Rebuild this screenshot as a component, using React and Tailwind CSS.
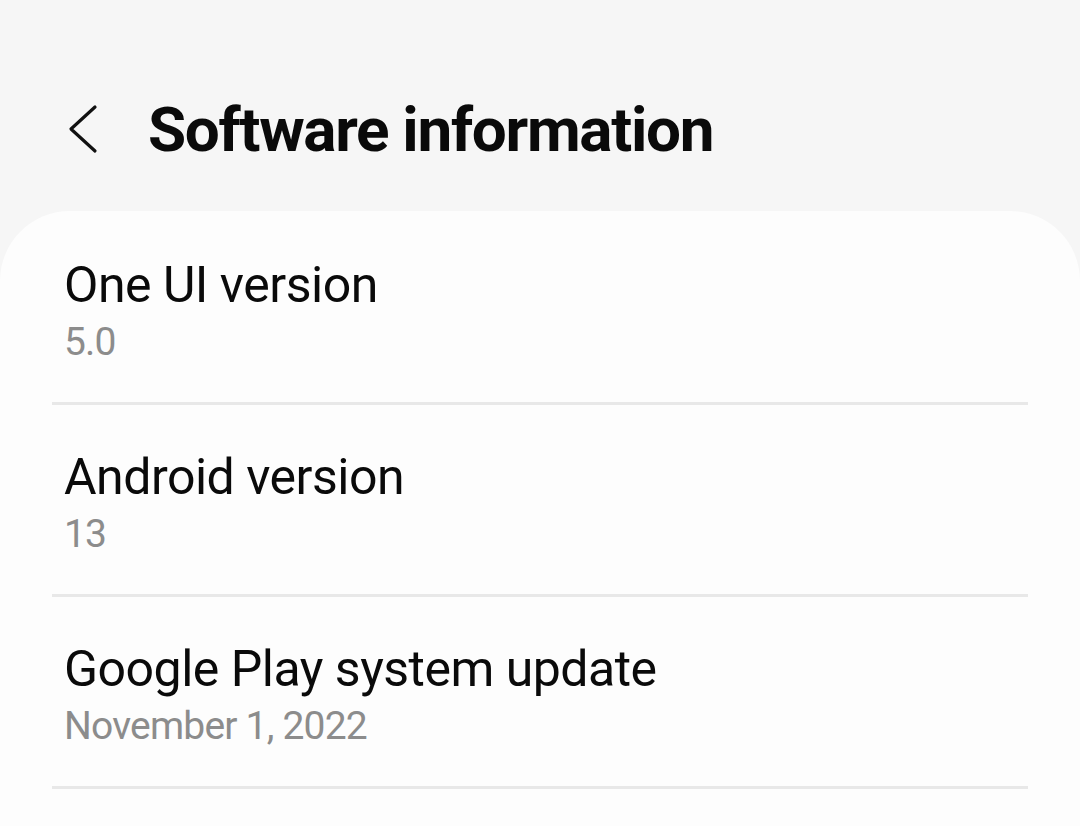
export default function App() {
  const items = [
    { t: "One UI version", s: "5.0" },
    { t: "Android version", s: "13" },
    { t: "Google Play system update", s: "November 1, 2022" },
  ];
  return (
    <div className="w-[1080px] h-[826px] overflow-hidden bg-[#f6f6f6] flex flex-col" style={{ fontFamily: "Roboto, 'Noto Sans', sans-serif" }}>
      <div className="h-[211px] shrink-0 flex items-start pt-[100px]">
        <div className="w-[148px] flex pl-[66px] pt-[4px]">
          <svg width="34" height="50" viewBox="0 0 34 50" fill="none">
            <path d="M29 3 L5 25 L29 47" stroke="#111" strokeWidth="3.2" strokeLinecap="round" strokeLinejoin="round" />
          </svg>
        </div>
        <h1 className="text-[62px] leading-[60px] font-bold text-[#0a0a0a] tracking-[-1.3px]">Software information</h1>
      </div>
      <div className="flex-1 bg-[#fdfdfd] rounded-t-[70px] px-[52px] pt-[2px]">
        {items.map((it) => (
          <div key={it.t} className="h-[192px] border-b-[3px] border-[#e8e8e8] px-[12px] pt-[44px]">
            <div className="text-[50px] leading-[56px] text-[#0a0a0a] tracking-[-0.5px]">{it.t}</div>
            <div className="text-[39px] leading-[48px] text-[#8c8c8c] mt-[5px] tracking-[-0.8px]">{it.s}</div>
          </div>
        ))}
      </div>
    </div>
  );
}
